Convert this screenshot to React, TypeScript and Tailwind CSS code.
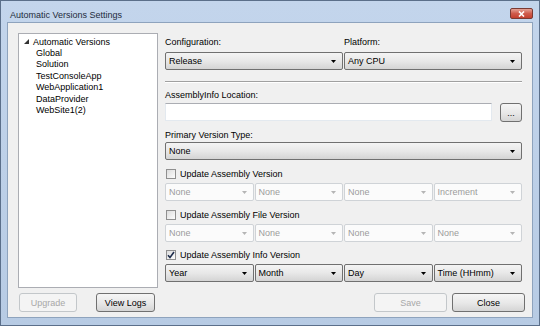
import React from "react";

const treeItems = [
  "Global",
  "Solution",
  "TestConsoleApp",
  "WebApplication1",
  "DataProvider",
  "WebSite1(2)",
];

function Arrow({ disabled }: { disabled?: boolean }) {
  return (
    <svg width="5" height="3" viewBox="0 0 5 3" className="shrink-0">
      <polygon points="0,0 5,0 2.5,3" fill={disabled ? "#b5b5b5" : "#000"} />
    </svg>
  );
}

function Select({ value, disabled }: { value: string; disabled?: boolean }) {
  return (
    <div
      className={
        disabled
          ? "flex h-[18px] items-center justify-between rounded-[2px] border border-[#cfd3d7] bg-[#fbfbfb] pl-[3px] pr-[6px] text-[#9c9c9c]"
          : "flex h-[18px] items-center justify-between rounded-[2px] border border-[#707070] bg-linear-to-b from-[#f4f4f4] via-[#e8e8e8] to-[#d4d4d4] pl-[3px] pr-[6px] text-black"
      }
    >
      <span>{value}</span>
      <Arrow disabled={disabled} />
    </div>
  );
}

function Check({ label, checked }: { label: string; checked?: boolean }) {
  return (
    <div className="flex h-[12px] items-center gap-[4px] pl-[1px]">
      <div className="flex h-[10px] w-[10px] items-center justify-center border border-[#8f8f8f] bg-linear-to-br from-[#dcdcdc] to-[#fdfdfd]">
        {checked && (
          <svg width="8" height="8" viewBox="0 0 8 8">
            <path d="M1 4.2 L3 6.5 L7 1" stroke="#1c2b4a" strokeWidth="1.6" fill="none" />
          </svg>
        )}
      </div>
      <span>{label}</span>
    </div>
  );
}

function Button({ label, disabled, className }: { label: string; disabled?: boolean; className: string }) {
  return (
    <div
      className={
        (disabled
          ? "border-[#c3c7ca] bg-[#f4f4f4] text-[#a8a8a8] "
          : "border-[#707070] bg-linear-to-b from-[#f5f5f5] via-[#e9e9e9] to-[#d5d5d5] text-black ") +
        "flex h-[19px] items-center justify-center rounded-[3px] border " +
        className
      }
    >
      {label}
    </div>
  );
}

export default function App() {
  return (
    <div className="flex h-[326px] w-[540px] flex-col overflow-hidden border border-[#5b6f8a] bg-linear-to-b from-[#c3d5ec] to-[#b7cbe4] font-['Liberation_Sans',Arial,sans-serif] text-[9px] leading-[12px] text-black">
      {/* title bar */}
      <div className="flex h-[21px] shrink-0 items-start justify-between pl-[9px] pr-[6px]">
        <div className="mt-[8px] text-[9px] text-[#1e2b3c]">Automatic Versions Settings</div>
        <div className="mt-[7px] flex h-[11px] w-[23px] items-center justify-center rounded-[2px] border border-[#7a3a33] bg-linear-to-b from-[#e3a196] via-[#cf5b4c] to-[#c43f2e]">
          <svg width="7" height="6" viewBox="0 0 7 6">
            <path d="M1 0.5 L6 5.5 M6 0.5 L1 5.5" stroke="#fff" strokeWidth="1.6" />
          </svg>
        </div>
      </div>

      {/* client area */}
      <div className="mx-[6px] flex h-[296px] flex-col border border-[#8ea3bd] bg-[#f0f0f0] px-[10px] pt-[10px]">
        <div className="flex gap-[7px]">
          {/* tree */}
          <div className="h-[255px] w-[140px] shrink-0 border border-[#abadb3] bg-white pt-[2px]">
            <div className="flex h-[11.4px] items-center pl-[5px]">
              <svg width="5" height="5" viewBox="0 0 5 5" className="mr-[4px]">
                <polygon points="5,0 5,5 0,5" fill="#333" />
              </svg>
              Automatic Versions
            </div>
            {treeItems.map((t) => (
              <div key={t} className="flex h-[11.4px] items-center pl-[17px]">
                {t}
              </div>
            ))}
          </div>

          {/* settings */}
          <div className="flex w-[359px] flex-col">
            <div className="mt-[3px] grid grid-cols-2 gap-px">
              <div>Configuration:</div>
              <div>Platform:</div>
            </div>
            <div className="mt-[4px] grid grid-cols-2 gap-px">
              <Select value="Release" />
              <Select value="Any CPU" />
            </div>

            <div className="mt-[11px] border-t border-b border-t-[#a0a0a0] border-b-white" />

            <div className="mt-[6px]">AssemblyInfo Location:</div>
            <div className="mt-[2px] flex gap-[8px]">
              <div className="h-[18px] flex-1 border border-[#e3e9ef] border-t-[#abadb3] bg-white" />
              <Button label="..." className="h-[18px] w-[22px] rounded-[2px]" />
            </div>

            <div className="mt-[7px]">Primary Version Type:</div>
            <div className="mt-[1px]">
              <Select value="None" />
            </div>

            <div className="mt-[8px]">
              <Check label="Update Assembly Version" />
            </div>
            <div className="mt-[3px] grid grid-cols-4 gap-px">
              <Select value="None" disabled />
              <Select value="None" disabled />
              <Select value="None" disabled />
              <Select value="Increment" disabled />
            </div>

            <div className="mt-[8px]">
              <Check label="Update Assembly File Version" />
            </div>
            <div className="mt-[3px] grid grid-cols-4 gap-px">
              <Select value="None" disabled />
              <Select value="None" disabled />
              <Select value="None" disabled />
              <Select value="None" disabled />
            </div>

            <div className="mt-[7px]">
              <Check label="Update Assembly Info Version" checked />
            </div>
            <div className="mt-[3px] grid grid-cols-4 gap-px">
              <Select value="Year" />
              <Select value="Month" />
              <Select value="Day" />
              <Select value="Time (HHmm)" />
            </div>
          </div>
        </div>

        {/* buttons */}
        <div className="mt-[5px] flex">
          <Button label="Upgrade" disabled className="ml-px w-[58px]" />
          <Button label="View Logs" className="ml-[19px] w-[59px]" />
          <div className="flex-1" />
          <Button label="Save" disabled className="w-[73px]" />
          <Button label="Close" className="ml-[5px] mr-[-3px] w-[73px]" />
        </div>
      </div>
    </div>
  );
}
